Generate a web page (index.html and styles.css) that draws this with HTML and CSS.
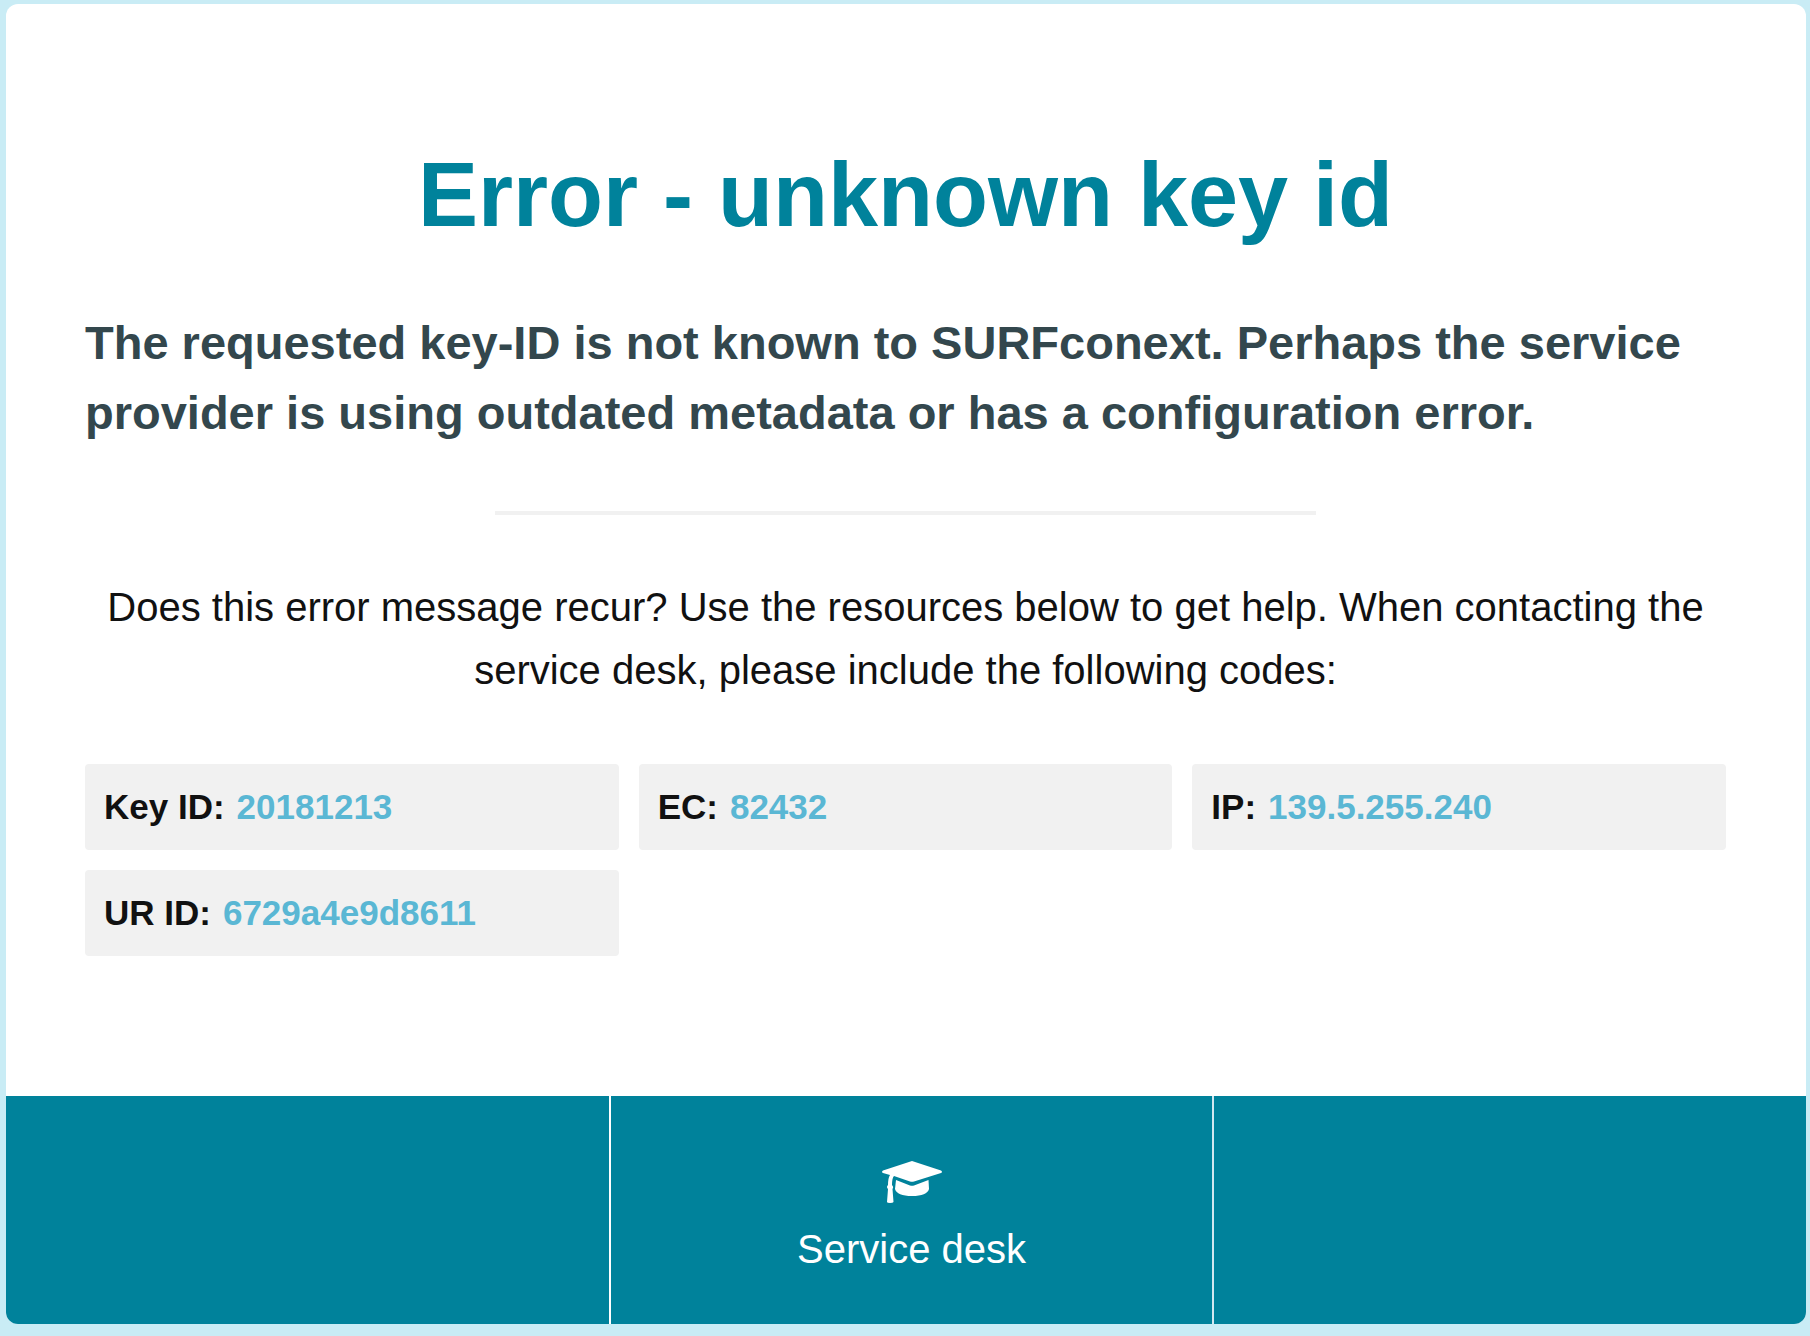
FILE: index.html
```html
<!DOCTYPE html>
<html lang="en">
<head>
<meta charset="utf-8">
<title>Error - unknown key id</title>
<link rel="stylesheet" href="styles.css">
</head>
<body>
<main class="card">
  <section class="content">
    <h1 class="title">Error - unknown key id</h1>
    <p class="message">The requested key-ID is not known to SURFconext. Perhaps the service provider is using outdated metadata or has a configuration error.</p>
    <hr class="divider">
    <p class="help">Does this error message recur? Use the resources below to get help. When contacting the service desk, please include the following codes:</p>
    <dl class="codes">
      <div class="code"><dt>Key ID:</dt><dd>20181213</dd></div>
      <div class="code"><dt>EC:</dt><dd>82432</dd></div>
      <div class="code"><dt>IP:</dt><dd>139.5.255.240</dd></div>
      <div class="code"><dt>UR ID:</dt><dd>6729a4e9d8611</dd></div>
    </dl>
  </section>
  <footer class="footer">
    <div class="cell"></div>
    <a class="cell desk" href="#">
      <svg class="cap" viewBox="0 0 60 42" aria-hidden="true"><path fill="currentColor" d="M30 0 59 9.500Q61 11 59 12L32 20.500Q30 21 28 20.500L12 15Q10 17 10 24Q12 26 10.500 28L11.500 41Q11 42 8 42 5 42 5 41L6 28Q4 26 6 24Q6 17 8 14L1 12Q-1 11 1 9.500ZM14 19 28 24.500Q30 25 32 24.500L46.500 19 47 28Q45 35 30 35 15 35 13 28Z"/></svg>
      <span>Service desk</span>
    </a>
    <div class="cell"></div>
  </footer>
</main>
</body>
</html>
```
FILE: styles.css
```css
* { box-sizing: border-box; }
body {
  margin: 0;
  padding: 4px 4px 12px 6px;
  background: #c9ecf5;
  font-family: "Liberation Sans", Arial, sans-serif;
  color: #111;
}
.card { background: #fff; border-radius: 12px; overflow: hidden; }
.content { padding: 139px 80px 140px 79px; }
.title {
  margin: 0 0 61px;
  font-size: 90px;
  line-height: 104px;
  text-align: center;
  color: #00829b;
}
.message {
  margin: 0;
  font-size: 47px;
  line-height: 70px;
  font-weight: bold;
  color: #33474d;
}
.divider { width: 50%; height: 4px; margin: 63px auto 61px; border: 0; background: #f1f1f1; }
.help { margin: 0 0 62px; font-size: 40px; line-height: 63px; text-align: center; }
.codes { display: grid; grid-template-columns: repeat(3, 1fr); gap: 20px; margin: 0; }
.code {
  display: flex;
  gap: 12px;
  padding: 20px 19px;
  border-radius: 4px;
  background: #f1f1f1;
  font-size: 35px;
  line-height: 46px;
  font-weight: bold;
}
.code dd { margin: 0; color: #5ab7d4; }
.footer { display: grid; grid-template-columns: 67fr 67fr 66fr; min-height: 228px; background: #00829b; }
.cell + .cell { border-left: 2px solid #fff; }
.cell.desk + .cell { border-left-color: #d3e8f0; }
.desk {
  display: flex;
  flex-direction: column;
  align-items: center;
  gap: 20px;
  padding-top: 65px;
  color: #fff;
  font-size: 40px;
  line-height: 52px;
  text-decoration: none;
}
.cap { width: 60px; height: 42px; }
```
